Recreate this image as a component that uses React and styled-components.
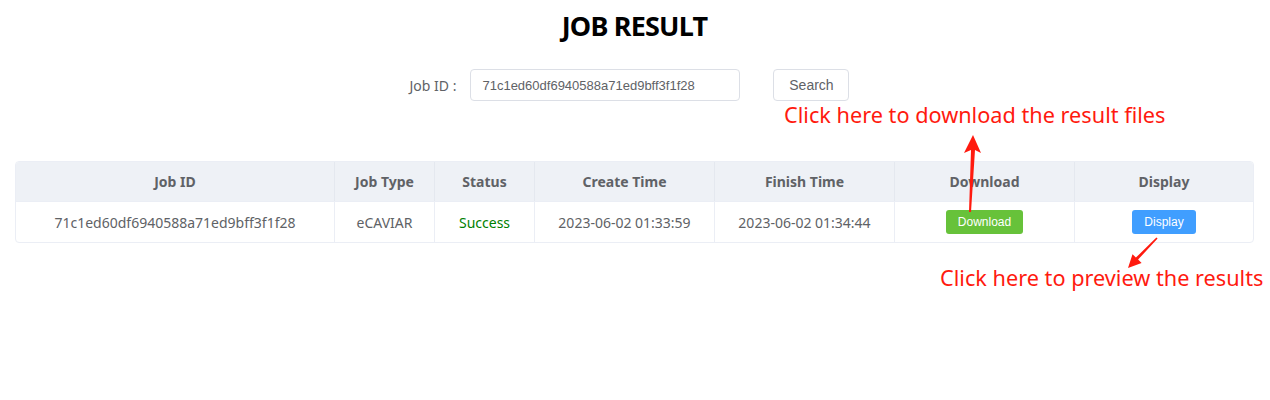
import React from "react";
import styled, { createGlobalStyle } from "styled-components";

const GlobalStyle = createGlobalStyle`
  body {
    margin: 0;
    background: #fff;
    font-family: "Noto Sans", "Open Sans", sans-serif;
  }
`;

const columns = [
  { key: "id", label: "Job ID", width: 319 },
  { key: "type", label: "Job Type", width: 100 },
  { key: "status", label: "Status", width: 100 },
  { key: "create", label: "Create Time", width: 180 },
  { key: "finish", label: "Finish Time", width: 180 },
  { key: "download", label: "Download", width: 180 },
  { key: "display", label: "Display", width: 180 },
];

const job = {
  id: "71c1ed60df6940588a71ed9bff3f1f28",
  type: "eCAVIAR",
  status: "Success",
  create: "2023-06-02 01:33:59",
  finish: "2023-06-02 01:34:44",
};

function App() {
  return (
    <Page>
      <GlobalStyle />
      <Title>JOB RESULT</Title>
      <SearchRow>
        <Label>Job ID :</Label>
        <Input defaultValue={job.id} />
        <SearchButton>Search</SearchButton>
      </SearchRow>

      <Table>
        <HeadRow>
          {columns.map((c) => (
            <HeadCell key={c.key} $w={c.width}>
              {c.label}
            </HeadCell>
          ))}
        </HeadRow>
        <BodyRow>
          <Cell $w={319}>{job.id}</Cell>
          <Cell $w={100}>{job.type}</Cell>
          <Cell $w={100}>
            <Status>{job.status}</Status>
          </Cell>
          <Cell $w={180}>{job.create}</Cell>
          <Cell $w={180}>{job.finish}</Cell>
          <Cell $w={180}>
            <SmallButton $color="#67c23a">Download</SmallButton>
          </Cell>
          <Cell $w={180}>
            <SmallButton $color="#409eff">Display</SmallButton>
          </Cell>
        </BodyRow>
      </Table>

      <Note $x={784} $y={100}>Click here to download the result files</Note>
      <Note $x={940} $y={263}>Click here to preview the results</Note>

      <Arrows width="1270" height="400" viewBox="0 0 1270 400">
        <polygon
          fill="#ff1a0f"
          points="973,135 981,153 975,150 971,212 969,212 971,150 964,153"
        />
        <polygon
          fill="#ff1a0f"
          points="1157.6,238.4 1138.1,259.6 1141.6,263 1128,268 1132.5,254.2 1135.9,257.6 1156.4,237.6"
        />
      </Arrows>
    </Page>
  );
}

export default App;

const Page = styled.div`
  position: relative;
  width: 1270px;
  height: 400px;
  padding: 0 16px 0 15px;
  box-sizing: border-box;
  overflow: hidden;
`;

const Title = styled.h1`
  margin: 0;
  padding-top: 9px;
  text-align: center;
  font-size: 27px;
  line-height: 34px;
  font-weight: 700;
  letter-spacing: -0.8px;
  color: #000;
`;

const SearchRow = styled.div`
  display: flex;
  align-items: center;
  justify-content: center;
  margin-top: 26px;
  padding-right: 10px;
`;

const Label = styled.span`
  font-size: 14px;
  color: #606266;
  margin-right: 14px;
`;

const Input = styled.input`
  width: 270px;
  height: 32px;
  box-sizing: border-box;
  border: 1px solid #dcdfe6;
  border-radius: 4px;
  padding: 0 11px;
  font-family: "Liberation Sans", Arial, sans-serif;
  font-size: 13px;
  color: #606266;
  outline: none;
`;

const SearchButton = styled.button`
  margin-left: 33px;
  width: 76px;
  height: 32px;
  box-sizing: border-box;
  border: 1px solid #dcdfe6;
  border-radius: 4px;
  background: #fff;
  font-family: "Liberation Sans", Arial, sans-serif;
  font-size: 14px;
  color: #606266;
`;

const Table = styled.div`
  margin-top: 60px;
  border: 1px solid #ebeef5;
  border-radius: 4px;
  overflow: hidden;
`;

const HeadRow = styled.div`
  display: flex;
  height: 39px;
  background: #eef1f6;
  border-bottom: 1px solid #ebeef5;
`;

const BodyRow = styled.div`
  display: flex;
  height: 40px;
`;

const HeadCell = styled.div`
  flex: 0 0 ${(p) => p.$w}px;
  box-sizing: border-box;
  display: flex;
  align-items: center;
  justify-content: center;
  font-size: 14px;
  font-weight: 700;
  color: #606266;
  border-right: 1px solid #e4e8ef;
  &:last-child {
    border-right: none;
    flex: 1;
  }
`;

const Cell = styled.div`
  flex: 0 0 ${(p) => p.$w}px;
  box-sizing: border-box;
  display: flex;
  align-items: center;
  justify-content: center;
  font-size: 14px;
  color: #606266;
  border-right: 1px solid #ebeef5;
  &:last-child {
    border-right: none;
    flex: 1;
  }
`;

const Status = styled.span`
  color: #008000;
`;

const SmallButton = styled.button`
  height: 24px;
  padding: 0 12px;
  border: none;
  border-radius: 3px;
  background: ${(p) => p.$color};
  color: #fff;
  font-family: "Liberation Sans", Arial, sans-serif;
  font-size: 12px;
`;

const Note = styled.div`
  position: absolute;
  left: ${(p) => p.$x}px;
  top: ${(p) => p.$y}px;
  font-size: 21.7px;
  line-height: 30px;
  color: #ff1a0f;
  white-space: nowrap;
`;

const Arrows = styled.svg`
  position: absolute;
  left: 0;
  top: 0;
  pointer-events: none;
`;
